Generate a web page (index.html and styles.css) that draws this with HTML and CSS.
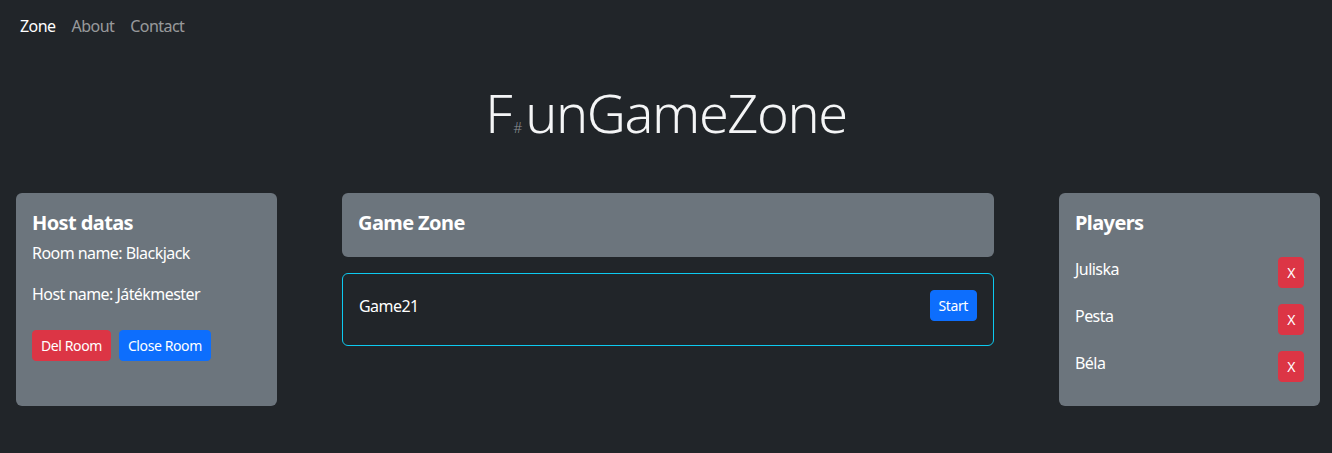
FILE: index.html
```html
<!DOCTYPE html>
<html lang="hu">
<head>
<meta charset="utf-8">
<title>FunGameZone</title>
<link rel="stylesheet" href="styles.css">
</head>
<body>
<nav class="navbar">
  <a class="nav-link active" href="#">Zone</a>
  <a class="nav-link" href="#">About</a>
  <a class="nav-link" href="#">Contact</a>
</nav>
<header class="hero">
  <h1 class="brand">F<span class="sharp">#</span>unGameZone</h1>
</header>
<main class="layout">
  <section class="card side">
    <h5 class="card-title">Host datas</h5>
    <p class="info">Room name: Blackjack</p>
    <p class="info">Host name: Játékmester</p>
    <div class="actions">
      <button class="btn btn-danger">Del Room</button>
      <button class="btn btn-primary">Close Room</button>
    </div>
  </section>
  <section class="middle">
    <div class="card">
      <h5 class="card-title">Game Zone</h5>
    </div>
    <div class="game-card">
      <span class="game-name">Game21</span>
      <button class="btn btn-primary">Start</button>
    </div>
  </section>
  <section class="card side">
    <h5 class="card-title">Players</h5>
    <ul class="players">
      <li class="player"><span>Juliska</span><button class="btn btn-danger btn-x">X</button></li>
      <li class="player"><span>Pesta</span><button class="btn btn-danger btn-x">X</button></li>
      <li class="player"><span>Béla</span><button class="btn btn-danger btn-x">X</button></li>
    </ul>
  </section>
</main>
</body>
</html>
```
FILE: styles.css
```css
* { box-sizing: border-box; }
html, body { margin: 0; padding: 0; }
body {
  background: #212529;
  color: #fff;
  font-family: "Noto Sans", "Open Sans", sans-serif;
  font-size: 16px;
  line-height: 1.5;
  letter-spacing: -0.55px;
}
.navbar {
  display: flex;
  padding: 2px 12px;
  height: 52px;
  align-items: center;
}
.nav-link {
  color: rgba(255,255,255,0.55);
  text-decoration: none;
  padding: 8px;
}
.nav-link.active { color: #fff; }
.hero {
  display: flex;
  justify-content: center;
  padding-top: 20px;
  height: 141px;
}
.brand {
  margin: 0;
  font-weight: 300;
  font-size: 54px;
  line-height: 80px;
  color: #f4f5f6;
  letter-spacing: -1.4px;
}
.sharp {
  font-size: 14px;
  color: #8b8f94;
  margin: 0 3px 0 2px;
  letter-spacing: 0;
}
.layout {
  display: grid;
  grid-template-columns: 261px 652px 261px;
  justify-content: space-between;
  align-items: start;
  padding: 0 12px 0 16px;
}
.card {
  background: #6c757d;
  border-radius: 6px;
  padding: 16px;
}
.side { height: 213px; }
.card-title {
  margin: 2px 0 6px;
  font-size: 20px;
  font-weight: 700;
  line-height: 24px;
  letter-spacing: -0.6px;
}
.info { margin: 0 0 17px; }
.actions {
  display: flex;
  gap: 8px;
  padding-top: 7px;
}
.btn {
  border: 1px solid transparent;
  border-radius: 4px;
  color: #fff;
  font-family: inherit;
  font-size: 14px;
  line-height: 1.5;
  padding: 4px 8px;
  letter-spacing: -0.4px;
  cursor: pointer;
}
.btn-danger { background: #dc3545; border-color: #dc3545; }
.btn-primary { background: #0d6efd; border-color: #0d6efd; }
.middle {
  display: flex;
  flex-direction: column;
  gap: 16px;
}
.game-card {
  border: 1px solid #0dcaf0;
  border-radius: 6px;
  padding: 16px 16px 24px;
  display: flex;
  justify-content: space-between;
  align-items: center;
}
.game-name { font-size: 16px; }
.players {
  list-style: none;
  margin: 0;
  padding: 16px 0 0;
  display: flex;
  flex-direction: column;
  gap: 16px;
}
.player {
  display: flex;
  justify-content: space-between;
  align-items: flex-start;
}
.btn-x {
  font-size: 14px;
}
```
